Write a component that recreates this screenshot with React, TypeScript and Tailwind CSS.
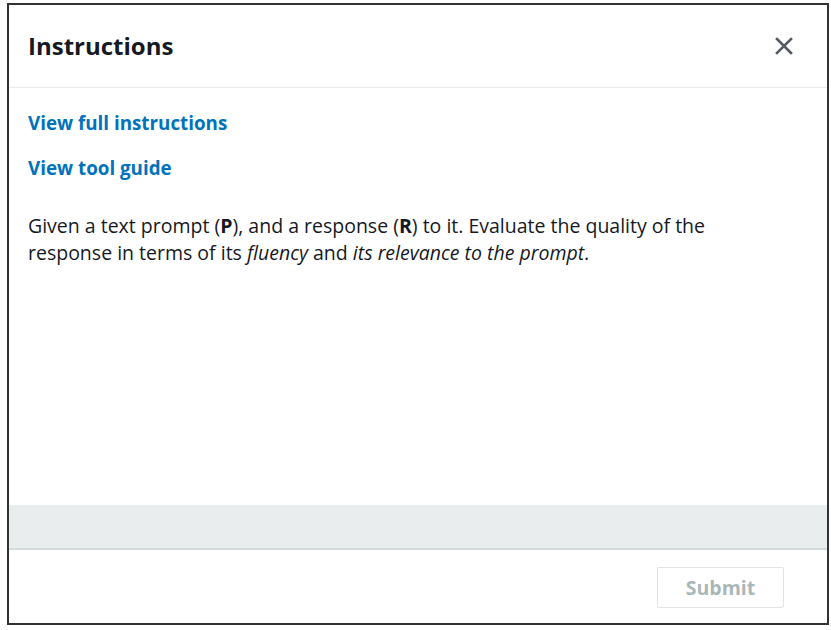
import React from "react";

export default function App() {
  return (
    <div className="w-[831px] h-[630px] bg-white pt-[3px] pl-[7px]" style={{ fontFamily: '"Open Sans", "Liberation Sans", sans-serif' }}>
      <div className="w-[822px] h-[622px] border-2 border-[#333333] flex flex-col">
        <div className="h-[83px] shrink-0 border-b border-[#eaeded] flex items-center justify-between pl-[19px] pr-[34px]">
          <h1 className="text-[24px] font-bold text-[#16191f] leading-none">Instructions</h1>
          <svg width="18" height="18" viewBox="0 0 18 18" className="text-[#545b64]">
            <path d="M2 2 L16 16 M16 2 L2 16" stroke="currentColor" strokeWidth="2.6" strokeLinecap="square" fill="none" />
          </svg>
        </div>
        <div className="flex-1 pl-[19px] pr-[19px] pt-[22px]">
          <a className="block text-[18.8px] font-bold text-[#0073bb] leading-[26px]">View full instructions</a>
          <a className="block text-[18.8px] font-bold text-[#0073bb] leading-[26px] mt-[19px]">View tool guide</a>
          <p className="text-[19.5px] text-[#16191f] leading-[27px] mt-[31px]">
            Given a text prompt (<b>P</b>), and a response (<b>R</b>) to it. Evaluate the quality of the
            <br />
            response in terms of its <i>fluency</i> and <i>its relevance to the prompt</i>.
          </p>
        </div>
        <div className="h-[45px] shrink-0 bg-[#e9eded] border-b-2 border-[#d5dbdb]"></div>
        <div className="h-[73px] shrink-0 flex items-center justify-end pr-[43px] pt-[2px]">
          <button className="w-[127px] h-[41px] border border-[#e1e4e4] rounded-[2px] text-[19.5px] font-bold text-[#aab7b8]">Submit</button>
        </div>
      </div>
    </div>
  );
}
